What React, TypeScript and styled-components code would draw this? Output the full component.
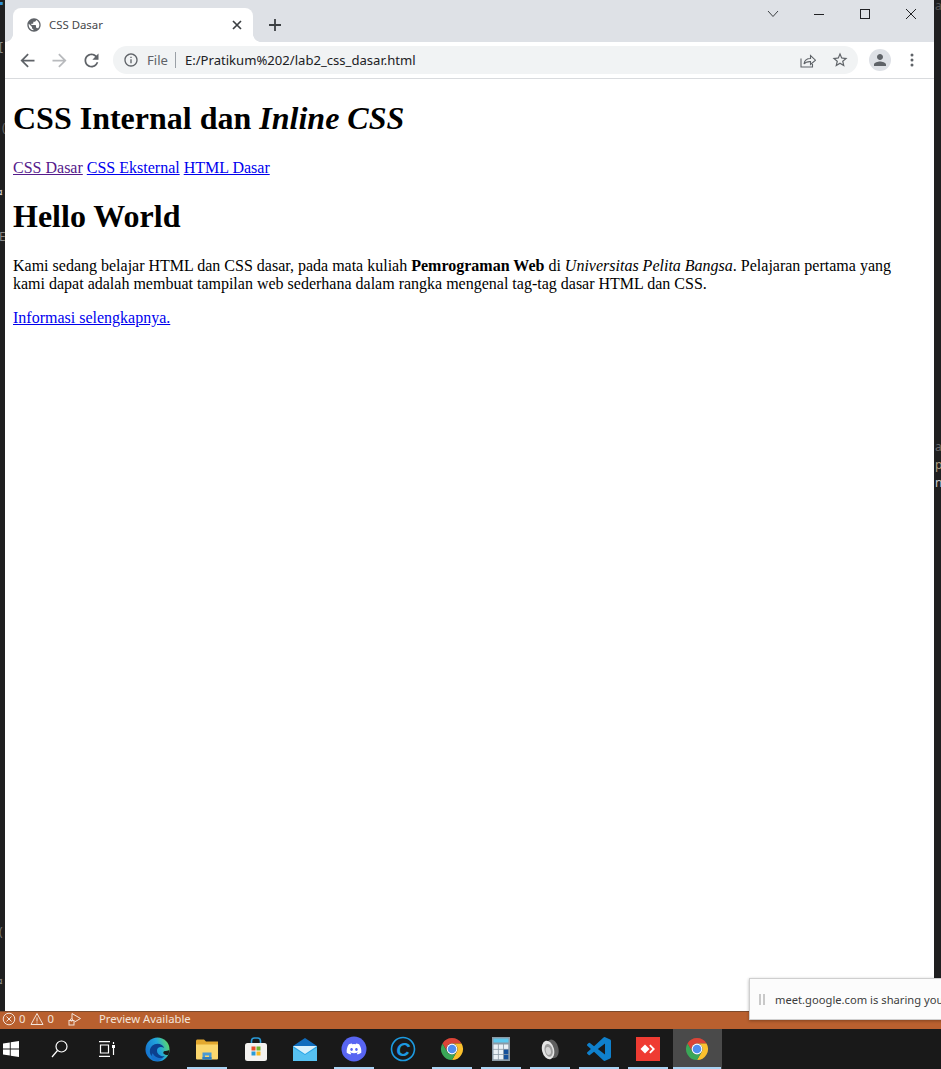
import React from "react";
import styled, { createGlobalStyle } from "styled-components";
import { FaDiscord } from "react-icons/fa";

const Global = createGlobalStyle`
  html, body { margin: 0; padding: 0; background: #1e1e1e; }
`;

const ui = `"Noto Sans", "Open Sans", "Liberation Sans", sans-serif`;

const Desktop = styled.div`
  position: relative;
  width: 941px;
  height: 1069px;
  overflow: hidden;
  display: flex;
  flex-direction: column;
  background: #1e1e1e;
`;
const Workspace = styled.div`
  display: flex;
  height: 1011px;
  background: #1f1f20;
`;
const Gutter = styled.div<{ $w: number }>`
  position: relative;
  width: ${(p) => p.$w}px;
  flex: none;
  overflow: hidden;
  font: 12px/14px ${ui};
  color: #9a9a9a;
`;
const GutterMark = styled.span<{ $top: number; $left: number; $color?: string }>`
  position: absolute;
  top: ${(p) => p.$top}px;
  left: ${(p) => p.$left}px;
  color: ${(p) => p.$color ?? "#8a8a8a"};
`;
const Browser = styled.div`
  width: 929px;
  flex: none;
  display: flex;
  flex-direction: column;
  background: #fff;
`;
const TabStrip = styled.div`
  height: 42px;
  box-sizing: border-box;
  padding: 8px 0 0 8px;
  display: flex;
  background: #dee1e6;
`;
const Tab = styled.div`
  position: relative;
  width: 240px;
  height: 34px;
  box-sizing: border-box;
  padding: 0 8px 1px 13px;
  display: flex;
  align-items: center;
  gap: 7px;
  background: #fff;
  border-radius: 8px 8px 0 0;
  font: 11.4px ${ui};
  color: #45474a;
  &::before, &::after {
    content: "";
    position: absolute;
    bottom: 0;
    width: 8px;
    height: 8px;
  }
  &::before { left: -8px; background: radial-gradient(circle at 0 0, #dee1e6 7.6px, #fff 8.2px); }
  &::after { right: -8px; background: radial-gradient(circle at 100% 0, #dee1e6 7.6px, #fff 8.2px); }
`;
const TabTitle = styled.span`
  flex: 1;
`;
const NewTab = styled.div`
  width: 28px;
  margin-left: 8px;
  display: flex;
  align-items: center;
  justify-content: center;
  height: 34px;
`;
const Spacer = styled.div`
  flex: 1;
`;
const WinControl = styled.div`
  width: 46px;
  height: 28px;
  margin-top: -8px;
  display: flex;
  align-items: center;
  justify-content: center;
`;
const Toolbar = styled.div`
  height: 37px;
  box-sizing: border-box;
  border-bottom: 1px solid #d9dbde;
  padding-left: 6px;
  display: flex;
  align-items: center;
  background: #fff;
`;
const NavButton = styled.div`
  width: 32px;
  height: 32px;
  display: flex;
  align-items: center;
  justify-content: center;
`;
const Omnibox = styled.div`
  width: 745px;
  height: 28px;
  margin: 0 11px 0 6px;
  padding: 0 2px 0 10px;
  box-sizing: border-box;
  display: flex;
  align-items: center;
  background: #f1f3f4;
  border-radius: 14px;
  font: 13.1px ${ui};
`;
const Scheme = styled.span`
  margin-left: 8px;
  color: #5f6368;
`;
const Divider = styled.span`
  width: 1px;
  height: 16px;
  margin: 0 9px 0 7px;
  background: #9aa0a6;
`;
const Url = styled.span`
  flex: 1;
  color: #202124;
`;
const OmniAction = styled.div`
  width: 32px;
  display: flex;
  justify-content: center;
`;
const Avatar = styled.div`
  width: 22px;
  height: 22px;
  border-radius: 50%;
  background: #dee1e6;
  display: flex;
  align-items: center;
  justify-content: center;
`;
const MenuDots = styled.div`
  width: 42px;
  margin-right: -1px;
  display: flex;
  justify-content: center;
`;
const Page = styled.main`
  flex: 1;
  padding: 0 8px;
  font: 16px/18px "Liberation Serif", "Times New Roman", serif;
  color: #000;
  overflow: hidden;
`;
const Heading = styled.h1`
  margin: 21.44px 0;
  font-size: 32px;
  line-height: 37px;
  font-weight: bold;
`;
const Para = styled.p`
  margin: 16px 0;
`;
const Link = styled.a<{ $visited?: boolean }>`
  color: ${(p) => (p.$visited ? "#551a8b" : "#0000ee")};
  text-decoration: underline;
`;
const StatusBar = styled.div`
  height: 18px;
  box-sizing: border-box;
  padding-bottom: 3px;
  display: flex;
  align-items: center;
  background: #b9602f;
  box-shadow: inset 0 1px 0 #7d4a2c;
  color: #f3e4da;
  font: 11.3px ${ui};
`;
const StatusGroup = styled.div<{ $w: number }>`
  width: ${(p) => p.$w}px;
  padding-left: 2px;
  box-sizing: border-box;
  display: flex;
  align-items: center;
  gap: 3px;
`;
const Taskbar = styled.div`
  height: 40px;
  display: flex;
  background: #191919;
`;
const TrayButton = styled.div<{ $w: number; $after?: number }>`
  width: ${(p) => p.$w}px;
  margin-right: ${(p) => p.$after ?? 0}px;
  flex: none;
  padding-right: 2px;
  box-sizing: border-box;
  display: flex;
  align-items: center;
  justify-content: center;
`;
const TaskItem = styled.div<{ $open?: boolean; $active?: boolean }>`
  position: relative;
  width: 49px;
  flex: none;
  box-sizing: border-box;
  padding-right: 2px;
  display: flex;
  align-items: center;
  justify-content: center;
  background: ${(p) => (p.$active ? "#4a4a4a" : "transparent")};
  &::after {
    content: "";
    display: ${(p) => (p.$open ? "block" : "none")};
    position: absolute;
    left: ${(p) => (p.$active ? 0 : 4)}px;
    right: ${(p) => (p.$active ? 1 : 5)}px;
    bottom: 0;
    height: 2px;
    background: #a9d3f3;
  }
`;
const Toast = styled.div`
  position: absolute;
  left: 749px;
  top: 978px;
  width: 260px;
  height: 42px;
  box-sizing: border-box;
  display: flex;
  align-items: center;
  padding-left: 9px;
  gap: 10px;
  background: #fcfcfc;
  border: 1px solid #cfcfcf;
  box-shadow: 0 1px 3px rgba(0, 0, 0, 0.3);
  font: 11.2px ${ui};
  color: #3c3c3c;
  white-space: nowrap;
`;
const PauseBars = styled.span`
  width: 6px;
  height: 11px;
  flex: none;
  box-sizing: border-box;
  border-left: 2px solid #c9c9c9;
  border-right: 2px solid #c9c9c9;
`;

const Mat = ({ d, size = 24, color = "#5f6368" }: { d: string; size?: number; color?: string }) => (
  <svg width={size} height={size} viewBox="0 0 24 24" fill={color}>
    <path d={d} />
  </svg>
);

const Chrome = () => (
  <svg width="24" height="24" viewBox="0 0 24 24">
    <path fill="#db4437" d="M2.470 6.500A11 11 0 0 1 21.530 6.500H12A5.500 5.500 0 0 0 7.240 14.750Z" />
    <path fill="#fbc02d" d="M21.530 6.500A11 11 0 0 1 12 23L16.760 14.750A5.500 5.500 0 0 0 12 6.500Z" />
    <path fill="#3aa757" d="M12 23A11 11 0 0 1 2.470 6.500L7.240 14.750A5.500 5.500 0 0 0 16.760 14.750Z" />
    <circle cx="12" cy="12" r="5.400" fill="#fff" />
    <circle cx="12" cy="12" r="4.300" fill="#4f8ef0" />
  </svg>
);

const Edge = () => (
  <svg width="25" height="25" viewBox="0 0 26 26">
    <defs>
      <linearGradient id="edgeRim" x1="0" y1="0.6" x2="1" y2="0.2">
        <stop offset="0" stopColor="#1572cf" />
        <stop offset="0.55" stopColor="#22a6dc" />
        <stop offset="1" stopColor="#63dc5c" />
      </linearGradient>
    </defs>
    <circle cx="13" cy="13" r="12.500" fill="url(#edgeRim)" />
    <path fill="#0c3f8e" d="M5 15c0-5 4-8 8-8 3.500 0 6 1.800 7 4.500-2-1.500-5-1.500-6.500 0-1.500 1.600-1.500 4.500.5 6.500 1.500 1.500 4 2.500 6.500 2-2 2-4.500 3-7 2.500C8 21.500 5 19 5 15z" />
    <path fill="#191919" d="M20.500 14.500c1.500 0 3.500-.3 4.500-1 .2 1.500 0 3.500-.8 5-1.500.5-3.200.2-4.700-1-.8-.8-.6-2.700 1-3z" />
    <path fill="#1670cc" d="M8 17c1.500 3 4.500 5 8 5 1 0 2 0 3-.5-2 2.300-4.500 3.500-6.500 3.500-2 0-4-.8-5.500-2-.5-2-.5-4 1-6z" />
  </svg>
);

const Folder = () => (
  <svg width="22" height="21" viewBox="0 0 22 21">
    <path fill="#e3a82f" d="M0 2C0 1 .7.4 1.500.4H8L10 2.500H22V6H0z" />
    <path fill="#fbd76e" d="M0 5.500h22V19.500a1 1 0 0 1-1 1H1a1 1 0 0 1-1-1z" />
    <path fill="#4a9ad4" d="M6.500 13.500h9v7h-2.500V16.500h-4v4H6.500z" />
    <rect x="6.500" y="18" width="9" height="2.500" fill="#2f7fc0" />
  </svg>
);

const Store = () => (
  <svg width="24" height="25" viewBox="0 0 24 25">
    <path d="M7.500 7V4a3 3 0 0 1 3-3h3a3 3 0 0 1 3 3v3" fill="none" stroke="#2a9bd8" strokeWidth="1.600" />
    <rect x="1" y="6" width="22" height="18" rx="2.500" fill="#f4f2f0" />
    <rect x="7.500" y="9.500" width="4" height="4" fill="#e8502a" />
    <rect x="12.500" y="9.500" width="4" height="4" fill="#72b52a" />
    <rect x="7.500" y="14.500" width="4" height="4" fill="#2a9bd8" />
    <rect x="12.500" y="14.500" width="4" height="4" fill="#f5b81f" />
  </svg>
);

const Mail = () => (
  <svg width="24" height="23" viewBox="0 0 24 23">
    <path fill="#0f6cbd" d="M12 0 24 8v3H0V8z" />
    <rect y="8" width="24" height="15" fill="#2aa5e6" />
    <path fill="#d8f0fb" d="M0 8h24L12 16z" />
    <path fill="#57c2f2" d="M0 9.500 12 17 24 9.500V23H0z" />
  </svg>
);

const Discord = () => (
  <svg width="26" height="26" viewBox="0 0 26 26">
    <circle cx="13" cy="13" r="12.500" fill="#5865f2" />
    <FaDiscord x="5" y="5" size={16} color="#fff" />
  </svg>
);

const CircleC = () => (
  <svg width="26" height="26" viewBox="0 0 26 26">
    <circle cx="13" cy="13" r="11.500" fill="none" stroke="#1c9ae0" strokeWidth="1.600" />
    <text x="13" y="20" textAnchor="middle" fontFamily="Liberation Sans" fontStyle="italic" fontWeight="bold" fontSize="19" fill="#1c9ae0">C</text>
  </svg>
);

const Calc = () => (
  <svg width="18" height="24" viewBox="0 0 18 24">
    <rect width="18" height="24" fill="#8b9aa6" />
    <rect x="1.500" y="1.500" width="15" height="4" fill="#5cc8ee" />
    {[0, 1, 2].flatMap((r) =>
      [0, 1, 2].map((c) => (
        <rect key={`${r}${c}`} x={1.5 + c * 5.2} y={7.5 + r * 5.2} width="4.400" height="4.400" fill={c === 2 && r > 0 ? "#14509a" : "#eaf1f6"} />
      ))
    )}
  </svg>
);

const Speaker = () => (
  <svg width="20" height="25" viewBox="0 0 20 25">
    <g transform="rotate(-14 10 12.500)">
      <ellipse cx="12.500" cy="12.500" rx="6" ry="9.500" fill="#5f5f5f" />
      <ellipse cx="8" cy="12.500" rx="6" ry="9.500" fill="#e4e4e4" />
      <ellipse cx="8.500" cy="13" rx="4" ry="6.500" fill="#9c9c9c" />
      <ellipse cx="8" cy="13.500" rx="2.500" ry="4" fill="#d4d4d4" />
    </g>
  </svg>
);

const VSCode = () => (
  <svg width="24" height="24" viewBox="0 0 24 24">
    <path fill="#0f80cc" d="M23.150 2.587L18.210.21a1.494 1.494 0 0 0-1.705.29l-9.460 8.630-4.120-3.128a.999.999 0 0 0-1.276.057L.327 7.261A1 1 0 0 0 .326 8.740L3.899 12 .326 15.260a1 1 0 0 0 .001 1.479L1.650 17.940a.999.999 0 0 0 1.276.057l4.120-3.128 9.460 8.630a1.492 1.492 0 0 0 1.704.29l4.942-2.377A1.500 1.500 0 0 0 24 20.060V3.939a1.500 1.500 0 0 0-.85-1.352zm-5.146 14.861L10.826 12l7.178-5.448v10.896z" />
  </svg>
);

const AnyDesk = () => (
  <svg width="24" height="24" viewBox="0 0 24 24">
    <rect width="24" height="24" fill="#ef3b32" />
    <path fill="#fff" d="M9 7.500 13.500 12 9 16.500 4.500 12z" />
    <path fill="#fff" d="M14.500 7.500 19 12l-4.500 4.500-1.300-1.300L16.400 12l-3.200-3.200z" />
  </svg>
);

export default function App() {
  return (
    <Desktop>
      <Global />
      <Workspace>
        <Gutter $w={5}>
          <GutterMark $top={-4} $left={-1} $color="#2f8fd8">▪</GutterMark>
          <GutterMark $top={40} $left={-1}>[</GutterMark>
          <GutterMark $top={121} $left={2} $color="#666">(</GutterMark>
          <GutterMark $top={186} $left={-4} $color="#e8e8e8">¤</GutterMark>
          <GutterMark $top={230} $left={-1}>E</GutterMark>
          <GutterMark $top={925} $left={-1} $color="#777">(</GutterMark>
          <GutterMark $top={975} $left={-4} $color="#999">¤</GutterMark>
        </Gutter>
        <Browser>
          <TabStrip>
            <Tab>
              <Mat size={16} color="#5f6368" d="M12 2C6.480 2 2 6.480 2 12s4.480 10 10 10 10-4.480 10-10S17.520 2 12 2zm-1 17.930c-3.950-.49-7-3.850-7-7.930 0-.62.08-1.210.21-1.790L9 15v1c0 1.100.9 2 2 2v1.930zm6.900-2.540c-.26-.81-1-1.390-1.900-1.390h-1v-3c0-.55-.45-1-1-1H8v-2h2c.55 0 1-.45 1-1V7h2c1.100 0 2-.9 2-2v-.41c2.930 1.190 5 4.060 5 7.410 0 2.080-.8 3.970-2.100 5.390z" />
              <TabTitle>CSS Dasar</TabTitle>
              <svg width="16" height="16" viewBox="0 0 16 16" stroke="#3c4043" strokeWidth="1.700">
                <path d="M4 4l8 8M12 4l-8 8" />
              </svg>
            </Tab>
            <NewTab>
              <svg width="14" height="14" viewBox="0 0 14 14" stroke="#3c4043" strokeWidth="1.800">
                <path d="M7 1v12M1 7h12" />
              </svg>
            </NewTab>
            <Spacer />
            <WinControl>
              <svg width="12" height="8" viewBox="0 0 12 8" fill="none" stroke="#3c4043">
                <path d="M1 1l5 5.500L11 1" />
              </svg>
            </WinControl>
            <WinControl>
              <svg width="10" height="10" viewBox="0 0 10 10" stroke="#202124"><path d="M0 5.500h10" /></svg>
            </WinControl>
            <WinControl>
              <svg width="10" height="10" viewBox="0 0 10 10" fill="none" stroke="#202124"><rect x=".5" y=".5" width="9" height="9" /></svg>
            </WinControl>
            <WinControl>
              <svg width="10" height="10" viewBox="0 0 10 10" stroke="#202124"><path d="M0 0l10 10M10 0L0 10" /></svg>
            </WinControl>
          </TabStrip>
          <Toolbar>
            <NavButton>
              <Mat size={21} color="#5f6368" d="M20 11H7.830l5.590-5.590L12 4l-8 8 8 8 1.410-1.410L7.830 13H20v-2z" />
            </NavButton>
            <NavButton>
              <Mat size={21} color="#b8babd" d="M4 11h12.170l-5.590-5.590L12 4l8 8-8 8-1.410-1.410L16.170 13H4v-2z" />
            </NavButton>
            <NavButton>
              <Mat size={21} color="#5f6368" d="M17.650 6.350C16.200 4.900 14.210 4 12 4c-4.420 0-7.990 3.580-7.990 8s3.570 8 7.990 8c3.730 0 6.840-2.550 7.730-6h-2.080c-.82 2.330-3.040 4-5.650 4-3.310 0-6-2.690-6-6s2.690-6 6-6c1.660 0 3.140.69 4.220 1.780L13 11h7V4l-2.350 2.350z" />
            </NavButton>
            <Omnibox>
              <Mat size={16} color="#5f6368" d="M11 7h2v2h-2zm0 4h2v6h-2zm1-9C6.480 2 2 6.480 2 12s4.480 10 10 10 10-4.480 10-10S17.520 2 12 2zm0 18c-4.410 0-8-3.590-8-8s3.590-8 8-8 8 3.590 8 8-3.590 8-8 8z" />
              <Scheme>File</Scheme>
              <Divider />
              <Url>E:/Pratikum%202/lab2_css_dasar.html</Url>
              <OmniAction>
                <svg width="16" height="16" viewBox="0 0 16 16" fill="none" stroke="#5f6368" strokeWidth="1.100">
                  <path d="M1 6.500V15h11.500v-3" />
                  <path d="M4 12c.5-3.500 3-5.500 6.500-5.500V3.500l5 4.700-5 4.300V9.600C8 9.500 5.500 10 4 12z" />
                </svg>
              </OmniAction>
              <OmniAction>
                <Mat size={18} color="#5f6368" d="M22 9.240l-7.190-.62L12 2 9.190 8.630 2 9.240l5.460 4.730L5.820 21 12 17.270 18.180 21l-1.630-7.030L22 9.240zM12 15.400l-3.760 2.270 1-4.280-3.320-2.880 4.380-.38L12 6.100l1.710 4.040 4.380.38-3.320 2.880 1 4.280L12 15.400z" />
              </OmniAction>
            </Omnibox>
            <Avatar>
              <Mat size={18} color="#5f6368" d="M12 12c2.210 0 4-1.790 4-4s-1.790-4-4-4-4 1.790-4 4 1.790 4 4 4zm0 2c-2.670 0-8 1.340-8 4v2h16v-2c0-2.660-5.330-4-8-4z" />
            </Avatar>
            <MenuDots>
              <svg width="4" height="14" viewBox="0 0 4 14" fill="#5f6368">
                <circle cx="2" cy="2" r="1.500" /><circle cx="2" cy="7" r="1.500" /><circle cx="2" cy="12" r="1.500" />
              </svg>
            </MenuDots>
          </Toolbar>
          <Page>
            <Heading>CSS Internal dan <em>Inline CSS</em></Heading>
            <Para>
              <Link href="#" $visited>CSS Dasar</Link> <Link href="#">CSS Eksternal</Link> <Link href="#">HTML Dasar</Link>
            </Para>
            <Heading>Hello World</Heading>
            <Para>
              Kami sedang belajar HTML dan CSS dasar, pada mata kuliah <strong>Pemrograman Web</strong> di <em>Universitas Pelita Bangsa</em>. Pelajaran pertama yang kami dapat adalah membuat tampilan web sederhana dalam rangka mengenal tag-tag dasar HTML dan CSS.
            </Para>
            <Para><Link href="#">Informasi selengkapnya.</Link></Para>
          </Page>
        </Browser>
        <Gutter $w={7}>
          <GutterMark $top={-1} $left={1} $color="#555">at</GutterMark>
          <GutterMark $top={440} $left={1} $color="#6a6a6a">a</GutterMark>
          <GutterMark $top={458} $left={1} $color="#b0a080">p</GutterMark>
          <GutterMark $top={476} $left={1} $color="#c8c8c8">n</GutterMark>
        </Gutter>
      </Workspace>
      <StatusBar>
        <StatusGroup $w={66}>
          <svg width="14" height="14" viewBox="0 0 14 14" fill="none" stroke="#f3e4da">
            <circle cx="7" cy="7" r="5.800" /><path d="M4.500 4.500l5 5M9.500 4.500l-5 5" />
          </svg>
          <span>0</span>
          <svg width="14" height="14" viewBox="0 0 14 14" fill="none" stroke="#f3e4da" style={{ marginLeft: 2 }}>
            <path d="M7 1.500 13 12.500H1zM7 5.500v4M7 10.500v1" />
          </svg>
          <span>0</span>
        </StatusGroup>
        <StatusGroup $w={33}>
          <svg width="14" height="14" viewBox="0 0 14 14" fill="none" stroke="#f3e4da">
            <path d="M4 7V1.500l8.500 5L6.500 10" />
            <rect x="1" y="8.500" width="5" height="4.500" />
            <circle cx="3.500" cy="8" r="1.200" />
          </svg>
        </StatusGroup>
        <span>Preview Available</span>
      </StatusBar>
      <Taskbar>
        <TrayButton $w={24}>
          <svg width="16" height="16" viewBox="0 0 16 16" fill="#fff">
            <path d="M0 2.400 6.800 1.400V7.500H0zM7.700 1.300 16 0V7.500H7.700zM0 8.400H6.800V14.600L0 13.600zM7.700 8.400H16V16L7.700 14.700z" />
          </svg>
        </TrayButton>
        <TrayButton $w={72}>
          <svg width="17" height="18" viewBox="0 0 17 18" fill="none" stroke="#fff" strokeWidth="1.200">
            <circle cx="10.500" cy="6.500" r="5.500" /><path d="M6.500 10.500 1 17" />
          </svg>
        </TrayButton>
        <TrayButton $w={24} $after={14}>
          <svg width="17" height="16" viewBox="0 0 17 16" fill="none" stroke="#fff" strokeWidth="1.200">
            <path d="M0 .6h11M0 15.400h11M1.500 4h8v8h-8zM14.500 1v2M14.500 7v7" />
            <rect x="13" y="4" width="3" height="3" fill="#fff" stroke="none" />
          </svg>
        </TrayButton>
        <TaskItem><Edge /></TaskItem>
        <TaskItem $open><Folder /></TaskItem>
        <TaskItem><Store /></TaskItem>
        <TaskItem><Mail /></TaskItem>
        <TaskItem $open><Discord /></TaskItem>
        <TaskItem><CircleC /></TaskItem>
        <TaskItem $open><Chrome /></TaskItem>
        <TaskItem $open><Calc /></TaskItem>
        <TaskItem $open><Speaker /></TaskItem>
        <TaskItem $open><VSCode /></TaskItem>
        <TaskItem $open><AnyDesk /></TaskItem>
        <TaskItem $open $active><Chrome /></TaskItem>
      </Taskbar>
      <Toast>
        <PauseBars />
        <span>meet.google.com is sharing your screen</span>
      </Toast>
    </Desktop>
  );
}
